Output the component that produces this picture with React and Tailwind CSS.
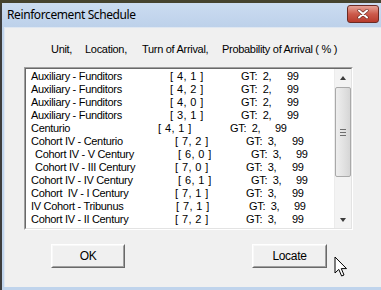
import React from 'react';

// each row: column widths are measured from the listbox's text start
const rows = [
  { name: 'Auxiliary - Funditors', pad: '', nw: 'w-[139px]', bw: 'w-[71px]', gw: 'w-[46px]', pos: '[ 4, 1 ]', gt: 'GT:  2,' },
  { name: 'Auxiliary - Funditors', pad: '', nw: 'w-[139px]', bw: 'w-[71px]', gw: 'w-[46px]', pos: '[ 4, 2 ]', gt: 'GT:  2,' },
  { name: 'Auxiliary - Funditors', pad: '', nw: 'w-[139px]', bw: 'w-[71px]', gw: 'w-[46px]', pos: '[ 4, 0 ]', gt: 'GT:  2,' },
  { name: 'Auxiliary - Funditors', pad: '', nw: 'w-[139px]', bw: 'w-[71px]', gw: 'w-[46px]', pos: '[ 3, 1 ]', gt: 'GT:  2,' },
  { name: 'Centurio', pad: '', nw: 'w-[127px]', bw: 'w-[72px]', gw: 'w-[45px]', pos: '[ 4, 1 ]', gt: 'GT:  2,' },
  { name: 'Cohort IV - Centurio', pad: '', nw: 'w-[144px]', bw: 'w-[71px]', gw: 'w-[46px]', pos: '[ 7, 2 ]', gt: 'GT:  3,' },
  { name: 'Cohort IV - V Century', pad: 'pl-[4px]', nw: 'w-[147px]', bw: 'w-[73px]', gw: 'w-[45px]', pos: '[ 6, 0 ]', gt: 'GT:  3,' },
  { name: 'Cohort IV - III Century', pad: 'pl-[4px]', nw: 'w-[144px]', bw: 'w-[71px]', gw: 'w-[46px]', pos: '[ 7, 0 ]', gt: 'GT:  3,' },
  { name: 'Cohort IV - IV Century', pad: '', nw: 'w-[147px]', bw: 'w-[73px]', gw: 'w-[45px]', pos: '[ 6, 1 ]', gt: 'GT:  3,' },
  { name: 'Cohort  IV - I Century', pad: '', nw: 'w-[144px]', bw: 'w-[71px]', gw: 'w-[46px]', pos: '[ 7, 1 ]', gt: 'GT:  3,' },
  { name: 'IV Cohort - Tribunus', pad: '', nw: 'w-[145px]', bw: 'w-[73px]', gw: 'w-[45px]', pos: '[ 7, 1 ]', gt: 'GT:  3,' },
  { name: 'Cohort IV - II Century', pad: '', nw: 'w-[144px]', bw: 'w-[71px]', gw: 'w-[46px]', pos: '[ 7, 2 ]', gt: 'GT:  3,' },
  { name: 'Hastati - Pilus Prior', pad: '', nw: 'w-[133px]', bw: 'w-[74px]', gw: 'w-[46px]', pos: '[ 6, 2 ]', gt: 'GT:  3,' },
];

function ScrollBar() {
  return (
    <div className="w-[17px] h-full flex flex-col bg-[#f3f3f3] border-l border-[#ececec]">
      <div className="h-[17px] flex items-center justify-center">
        <div className="w-0 h-0 border-l-[3.5px] border-r-[3.5px] border-b-[4px] border-l-transparent border-r-transparent border-b-[#3c3c3c]" />
      </div>
      <div className="flex-1 flex flex-col pt-[1px]">
        <div className="h-[90px] rounded-[2px] border border-[#a9a9a9] bg-gradient-to-r from-[#eeeeee] via-[#e3e3e3] to-[#d6d6d6] flex flex-col items-center justify-center gap-[2px]">
          <div className="w-[6px] h-px bg-[#6e6e6e]" />
          <div className="w-[6px] h-px bg-[#6e6e6e]" />
          <div className="w-[6px] h-px bg-[#6e6e6e]" />
        </div>
      </div>
      <div className="h-[17px] flex items-center justify-center">
        <div className="w-0 h-0 border-l-[3.5px] border-r-[3.5px] border-t-[4px] border-l-transparent border-r-transparent border-t-[#3c3c3c]" />
      </div>
    </div>
  );
}

function Button({ label, w }) {
  return (
    <div className={`${w} h-[24px] border border-t-white border-l-white border-r-[#696969] border-b-[#696969]`}>
      <div className="w-full h-full border border-t-[#f8f8f8] border-l-[#f8f8f8] border-r-[#a0a0a0] border-b-[#a0a0a0] bg-[#f0f0f0] flex items-center justify-center text-[12px] text-black">
        {label}
      </div>
    </div>
  );
}

export default function App() {
  return (
    <div
      className="w-[381px] h-[290px] overflow-hidden bg-[#45432f] relative"
      style={{ fontFamily: "'Liberation Sans', Arial, sans-serif" }}
    >
      <div className="mt-[3px] h-[287px] bg-[#c0d4ec] border-l-[2px] border-[#3d3d3d] rounded-tl-[6px] flex flex-col">
        {/* title bar */}
        <div className="h-[24px] flex items-center justify-between pl-[5px] pr-[2px] bg-gradient-to-b from-[#cbdcf1] to-[#bdd1ea]">
          <span className="text-[12px] text-black tracking-[-0.4px]" style={{ fontFamily: "'Noto Sans', 'Open Sans', sans-serif" }}>
            Reinforcement Schedule
          </span>
          <div className="w-[32px] h-[18px] -mt-[2px] rounded-[3px] border border-[#6b2a23] bg-gradient-to-b from-[#e4a398] via-[#cc5a4b] to-[#b83b2c] flex items-center justify-center">
            <svg width="12" height="10" viewBox="0 0 12 10">
              <path d="M2 1.5 L10 8.5 M10 1.5 L2 8.5" stroke="#6a2a22" strokeWidth="3.2" strokeLinecap="round" />
              <path d="M2 1.5 L10 8.5 M10 1.5 L2 8.5" stroke="#ffffff" strokeWidth="2" strokeLinecap="round" />
            </svg>
          </div>
        </div>

        {/* client area */}
        <div className="flex-1 ml-[2px] mb-[3px] bg-[#f0f0f0] border-t border-l border-[#dfe7f1] flex flex-col text-[11px] tracking-[-0.3px] text-black">
          <div className="mt-[15px] h-[13px] leading-[13px] flex pl-[46px] whitespace-pre">
            <span className="w-[34px]">Unit,</span>
            <span className="w-[57px]">Location,</span>
            <span className="w-[80px]">Turn of Arrival,</span>
            <span>Probability of Arrival ( % )</span>
          </div>

          <div className="mt-[11px] ml-[19px] w-[329px] h-[163px] border border-t-[#a0a0a0] border-l-[#a0a0a0] border-r-white border-b-white">
            <div className="w-full h-full border border-t-[#696969] border-l-[#696969] border-r-[#e3e3e3] border-b-[#e3e3e3] bg-white flex">
              <div className="flex-1 overflow-hidden pl-[5px] pt-[1px]">
                {rows.map((r, i) => (
                  <div key={i} className="h-[13px] leading-[13px] flex whitespace-pre">
                    <span className={`${r.nw} ${r.pad} shrink-0`}>{r.name}</span>
                    <span className={`${r.bw} shrink-0 tracking-[0.4px]`}>{r.pos}</span>
                    <span className={`${r.gw} shrink-0`}>{r.gt}</span>
                    <span>99</span>
                  </div>
                ))}
              </div>
              <ScrollBar />
            </div>
          </div>

          <div className="mt-[14px] flex pl-[46px] gap-[127px]">
            <Button label="OK" w="w-[74px]" />
            <Button label="Locate" w="w-[75px]" />
          </div>
        </div>
      </div>

      {/* mouse pointer */}
      <svg className="absolute left-[334px] top-[256px]" width="14" height="22" viewBox="0 0 14 22">
        <path d="M1 1 L1 17 L4.8 13.4 L7.6 20 L10 19 L7.3 12.6 L12.5 12.6 Z" fill="#ffffff" stroke="#000000" strokeWidth="1" strokeLinejoin="miter" />
      </svg>
    </div>
  );
}
